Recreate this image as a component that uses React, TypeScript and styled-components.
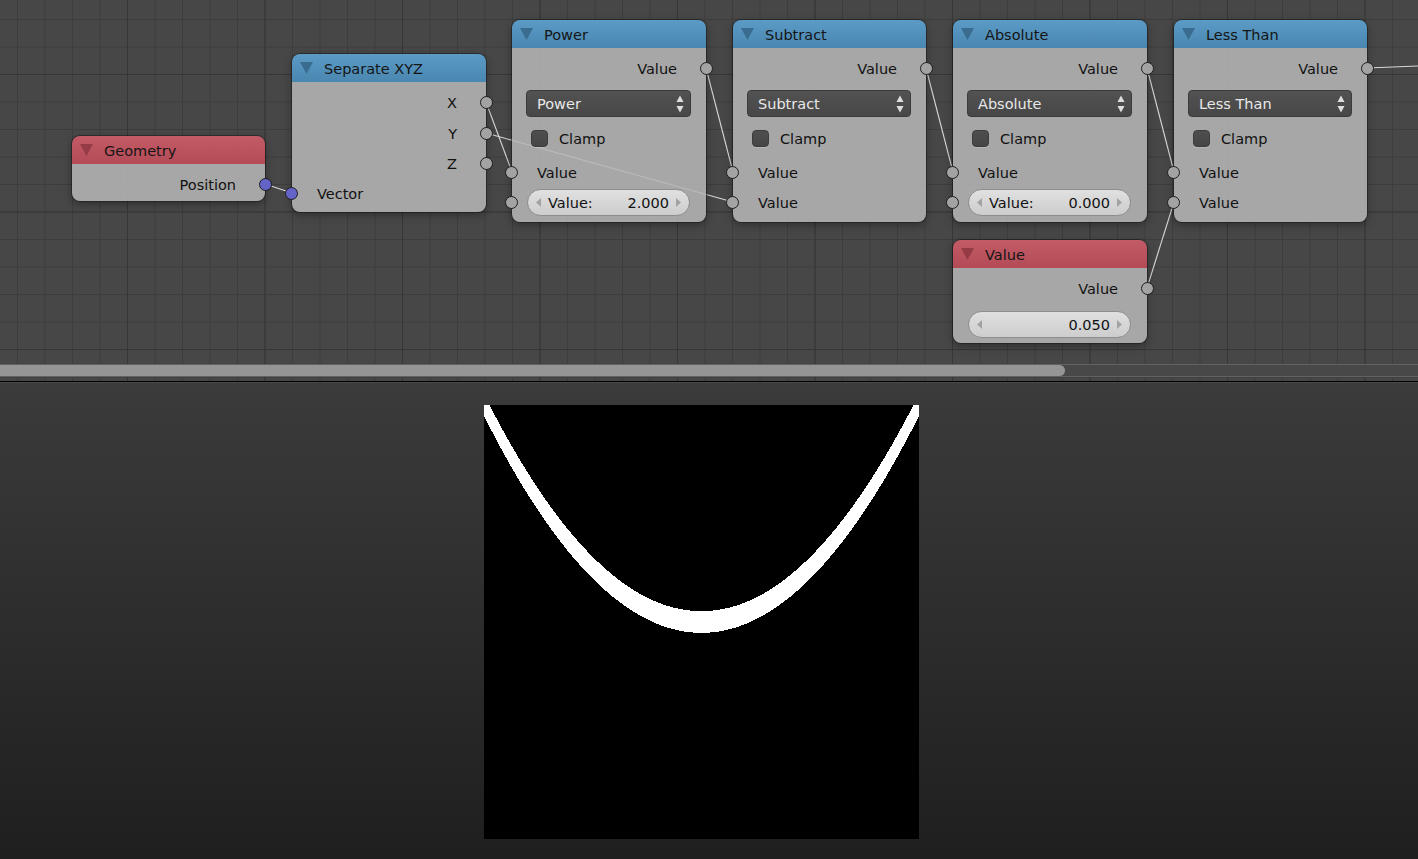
import React from "react";
import styled, { createGlobalStyle } from "styled-components";

const GlobalStyle = createGlobalStyle`
  html, body { margin: 0; padding: 0; background: #1e1e1e; }
  body { font-family: "DejaVu Sans", "Liberation Sans", sans-serif; }
  * { box-sizing: border-box; }
`;

type Kind = "input" | "converter";

const Screen = styled.div`
  width: 1418px;
  height: 859px;
  display: flex;
  flex-direction: column;
  overflow: hidden;
`;

const NodeCanvas = styled.div`
  position: relative;
  flex: none;
  height: 381px;
  overflow: hidden;
  background-color: #474747;
  background-image:
    linear-gradient(90deg, #363636 1px, transparent 1px),
    linear-gradient(180deg, #363636 1px, transparent 1px),
    linear-gradient(90deg, #3d3d3d 1px, transparent 1px),
    linear-gradient(180deg, #3d3d3d 1px, transparent 1px);
  background-size: 137.5px 100%, 100% 137.5px, 27.5px 100%, 100% 27.5px;
  background-position: 127px 0, 0 74px, 17px 0, 0 19px;
`;

const LinkLayer = styled.svg`
  position: absolute;
  left: 0;
  top: 0;
  pointer-events: none;
`;

const NodeBox = styled.div<{ $x: number; $y: number; $w: number }>`
  position: absolute;
  left: ${(p) => p.$x}px;
  top: ${(p) => p.$y}px;
  width: ${(p) => p.$w}px;
  display: flex;
  flex-direction: column;
  border-radius: 8px;
  box-shadow: 0 0 0 1px rgba(25, 25, 25, 0.55), 0 3px 8px rgba(0, 0, 0, 0.35);
`;

const Header = styled.div<{ $kind: Kind }>`
  height: 28px;
  display: flex;
  align-items: center;
  gap: 11px;
  padding-left: 8px;
  border-radius: 8px 8px 0 0;
  color: #151515;
  font-size: 14.5px;
  background: ${(p) =>
    p.$kind === "input"
      ? "linear-gradient(180deg, rgba(203,92,104,0.94) 0%, rgba(186,76,88,0.94) 100%)"
      : "linear-gradient(180deg, rgba(92,160,206,0.94) 0%, rgba(74,139,183,0.94) 100%)"};
`;

const Title = styled.span`
  padding-top: 2px;
`;

const Body = styled.div<{ $pb: number }>`
  display: flex;
  flex-direction: column;
  padding: 4px 0 ${(p) => p.$pb}px 0;
  border-radius: 0 0 8px 8px;
  background: rgba(181, 181, 181, 0.88);
`;

const Row = styled.div<{ $h: number; $side: "in" | "out" }>`
  position: relative;
  height: ${(p) => p.$h}px;
  display: flex;
  align-items: center;
  justify-content: ${(p) => (p.$side === "out" ? "flex-end" : "flex-start")};
  padding: ${(p) => (p.$side === "out" ? "2px 29px 0 0" : "2px 0 0 25px")};
  color: #111;
  font-size: 14.5px;
`;

const Socket = styled.span<{ $side: "in" | "out"; $vector?: boolean }>`
  position: absolute;
  top: 50%;
  ${(p) => (p.$side === "out" ? "right: -7px;" : "left: -7px;")}
  width: 13px;
  height: 13px;
  margin-top: -6.5px;
  border-radius: 50%;
  background: ${(p) => (p.$vector ? "#6464c8" : "#a3a3a3")};
  border: 1px solid #1c1c1c;
`;

const Dropdown = styled.div`
  height: 27px;
  margin: 6px 15px 7px 14px;
  display: flex;
  align-items: center;
  justify-content: space-between;
  padding: 1px 6px 0 10px;
  border-radius: 4px;
  border: 1px solid #3b3b3b;
  background: linear-gradient(180deg, #525252 0%, #474747 100%);
  color: #e8e8e8;
  font-size: 14.5px;
`;

const ClampRow = styled.div`
  height: 28px;
  margin-bottom: 5px;
  display: flex;
  align-items: center;
  gap: 11px;
  padding-left: 19px;
  color: #111;
  font-size: 14.5px;
`;

const Checkbox = styled.span`
  width: 17px;
  height: 17px;
  border-radius: 4px;
  border: 1px solid #3c3c3c;
  background: linear-gradient(180deg, #4e4e4e 0%, #464646 100%);
  box-shadow: 0 1px 0 rgba(255, 255, 255, 0.18);
`;

const ClampLabel = styled.span`
  padding-top: 2px;
`;

const SliderRow = styled.div<{ $mt: number }>`
  position: relative;
  height: 30px;
  margin-top: ${(p) => p.$mt}px;
  display: flex;
  align-items: center;
  padding: 0 16px 0 15px;
`;

const Slider = styled.div`
  flex: 1;
  height: 27px;
  display: flex;
  align-items: center;
  gap: 7px;
  padding: 1px 8px 0;
  border-radius: 14px;
  border: 1px solid #8e8e8e;
  background: linear-gradient(180deg, #e0e0e0 0%, #cdcdcd 100%);
  color: #111;
  font-size: 14.5px;
`;

const SliderValue = styled.span`
  margin-left: auto;
`;

const Scrollbar = styled.div`
  position: absolute;
  left: 0;
  right: 0;
  bottom: 4px;
  height: 13px;
  display: flex;
  border-top: 1px solid #626262;
  border-bottom: 1px solid #626262;
  background: #484848;
`;

const ScrollThumb = styled.div`
  width: 1065px;
  height: 100%;
  background: #959595;
  border-radius: 0 6px 6px 0;
`;

const Divider = styled.div`
  flex: none;
  height: 2px;
  border-top: 1px solid #000;
  background: #4a4a4a;
`;

const PreviewPanel = styled.div`
  flex: 1;
  padding: 22px 0 0 484px;
  background: linear-gradient(180deg, #3b3b3b 0%, #2d2d2d 50%, #1f1f1f 100%);
`;

const PreviewImage = styled.svg`
  display: block;
  background: #000;
`;

const Collapse = ({ kind }: { kind: Kind }) => (
  <svg width="13" height="12" viewBox="0 0 13 12">
    <polygon points="0,0 13,0 6.5,12" fill={kind === "input" ? "#953b46" : "#3a6c90"} />
  </svg>
);

const UpDown = () => (
  <svg width="8" height="18" viewBox="0 0 8 18">
    <polygon points="0.5,7 4,0.5 7.5,7" fill="#dedede" />
    <polygon points="0.5,11 7.5,11 4,17.5" fill="#dedede" />
  </svg>
);

const SmallArrow = ({ dir }: { dir: "l" | "r" }) => (
  <svg width="5" height="9" viewBox="0 0 5 9">
    <polygon points={dir === "l" ? "5,0 0,4.5 5,9" : "0,0 5,4.5 0,9"} fill="#a2a2a2" />
  </svg>
);

type NodeProps = {
  x: number;
  y: number;
  w: number;
  kind: Kind;
  title: string;
  pb: number;
  children: React.ReactNode;
};

const Node = ({ x, y, w, kind, title, pb, children }: NodeProps) => (
  <NodeBox $x={x} $y={y} $w={w}>
    <Header $kind={kind}>
      <Collapse kind={kind} />
      <Title>{title}</Title>
    </Header>
    <Body $pb={pb}>{children}</Body>
  </NodeBox>
);

const OutSocketRow = ({ label, h = 32, vector }: { label: string; h?: number; vector?: boolean }) => (
  <Row $h={h} $side="out">
    {label}
    <Socket $side="out" $vector={vector} />
  </Row>
);

const InSocketRow = ({ label, vector }: { label: string; vector?: boolean }) => (
  <Row $h={30} $side="in">
    {label}
    <Socket $side="in" $vector={vector} />
  </Row>
);

const ValueSlider = ({ label, value, mt = 0, socket }: { label?: string; value: string; mt?: number; socket?: boolean }) => (
  <SliderRow $mt={mt}>
    {socket && <Socket $side="in" />}
    <Slider>
      <SmallArrow dir="l" />
      {label && <span>{label}</span>}
      <SliderValue>{value}</SliderValue>
      <SmallArrow dir="r" />
    </Slider>
  </SliderRow>
);

const MathNode = ({ x, w, op, second }: { x: number; w: number; op: string; second?: string }) => (
  <Node x={x} y={20} w={w} kind="converter" title={op} pb={5}>
    <OutSocketRow label="Value" />
    <Dropdown>
      <span>{op}</span>
      <UpDown />
    </Dropdown>
    <ClampRow>
      <Checkbox />
      <ClampLabel>Clamp</ClampLabel>
    </ClampRow>
    <InSocketRow label="Value" />
    {second !== undefined ? <ValueSlider label="Value:" value={second} socket /> : <InSocketRow label="Value" />}
  </Node>
);

const links: [number, number, number, number][] = [
  [265, 184, 292, 193],
  [486, 102, 512, 172],
  [486, 133, 733, 202],
  [706, 68, 733, 172],
  [926, 68, 953, 172],
  [1147, 68, 1174, 172],
  [1147, 288, 1174, 202],
  [1367, 68, 1418, 66],
];

const IMG_W = 435;
const IMG_H = 434;

const bandPoints = (() => {
  const toPx = (x: number, y: number) =>
    `${(((x + 1) / 2) * IMG_W).toFixed(2)},${(((1 - y) / 2) * IMG_H).toFixed(2)}`;
  const pts: string[] = [];
  const n = 240;
  for (let i = 0; i <= n; i++) {
    const x = -1.1 + (2.2 * i) / n;
    pts.push(toPx(x, x * x + 0.05));
  }
  for (let i = n; i >= 0; i--) {
    const x = -1.1 + (2.2 * i) / n;
    pts.push(toPx(x, x * x - 0.05));
  }
  return pts.join(" ");
})();

export default function App() {
  return (
    <>
      <GlobalStyle />
      <Screen>
        <NodeCanvas>
          <LinkLayer width={1418} height={381}>
            {links.map(([x1, y1, x2, y2], i) => (
              <line key={i} x1={x1} y1={y1} x2={x2} y2={y2} stroke="#d6d6d6" strokeWidth={1.1} />
            ))}
          </LinkLayer>

          <Node x={72} y={136} w={193} kind="input" title="Geometry" pb={1}>
            <OutSocketRow label="Position" vector />
          </Node>

          <Node x={292} y={54} w={194} kind="converter" title="Separate XYZ" pb={4}>
            <OutSocketRow label="X" />
            <OutSocketRow label="Y" h={30} />
            <OutSocketRow label="Z" h={30} />
            <InSocketRow label="Vector" vector />
          </Node>

          <MathNode x={512} w={194} op="Power" second="2.000" />
          <MathNode x={733} w={193} op="Subtract" />
          <MathNode x={953} w={194} op="Absolute" second="0.000" />
          <MathNode x={1174} w={193} op="Less Than" />

          <Node x={953} y={240} w={194} kind="input" title="Value" pb={4}>
            <OutSocketRow label="Value" />
            <ValueSlider value="0.050" mt={5} />
          </Node>

          <Scrollbar>
            <ScrollThumb />
          </Scrollbar>
        </NodeCanvas>
        <Divider />
        <PreviewPanel>
          <PreviewImage width={IMG_W} height={IMG_H} viewBox={`0 0 ${IMG_W} ${IMG_H}`}>
            <polygon points={bandPoints} fill="#fff" shapeRendering="crispEdges" />
          </PreviewImage>
        </PreviewPanel>
      </Screen>
    </>
  );
}
